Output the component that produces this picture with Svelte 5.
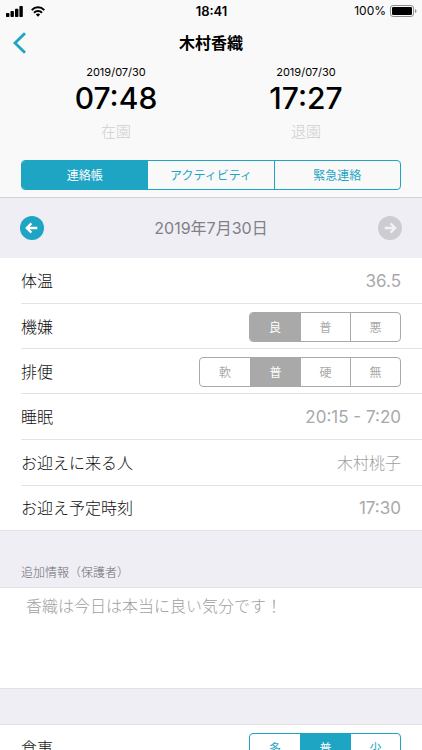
<script lang="ts">
	// Daily contact-book screen for one child.

	const tabs = ['連絡帳', 'アクティビティ', '緊急連絡'];
	let activeTab = $state(0);

	const attendance = [
		{ date: '2019/07/30', time: '07:48', label: '在園' },
		{ date: '2019/07/30', time: '17:27', label: '退園' },
	];

	let temperature = $state('36.5');
	let mood = $state('良');
	let stool = $state('普');
	let sleep = $state('20:15 - 7:20');
	let pickupPerson = $state('木村桃子');
	let pickupTime = $state('17:30');
	let note = $state('香織は今日は本当に良い気分です！');
	let meal = $state('普');
</script>

{#snippet segments(name: string, options: string[], value: string, onpick: (v: string) => void)}
	<div class="segments">
		{#each options as option}
			<label class="segment">
				<input
					type="radio"
					{name}
					value={option}
					checked={option === value}
					onchange={() => onpick(option)}
				/>
				<span>{option}</span>
			</label>
		{/each}
	</div>
{/snippet}

<div class="screen">
	<header class="header">
		<div class="status">
			<div class="status-left">
				<svg width="17" height="11" viewBox="0 0 17 11" aria-hidden="true">
					<rect x="0" y="7" width="3.4" height="4" rx="0.8" />
					<rect x="4.5" y="5" width="3.4" height="6" rx="0.8" />
					<rect x="9" y="2.7" width="3.4" height="8.3" rx="0.8" />
					<rect x="13.4" y="0" width="3.4" height="11" rx="0.8" />
				</svg>
				<svg width="14" height="11" viewBox="0 0 14 11" aria-hidden="true">
					<g fill="none" stroke="#000" stroke-width="2">
						<path d="M0.7 4.1 C4.2 0.4 9.8 0.4 13.3 4.1" />
						<path d="M3 6.8 C5.2 4.5 8.8 4.5 11 6.8" />
					</g>
					<path d="M4.8 8.5 Q7 6.6 9.2 8.5 L7 10.8 Z" />
				</svg>
			</div>
			<span class="clock">18:41</span>
			<div class="status-right">
				<span>100%</span>
				<svg width="27" height="12" viewBox="0 0 27 12" aria-hidden="true">
					<rect x="0.5" y="0.5" width="23" height="11" rx="2.6" fill="none" stroke="#8c8c8c" />
					<rect x="2" y="2" width="20" height="8" rx="1.2" />
					<path d="M25 4 Q26.5 4.6 26.5 6 T25 8 Z" fill="#8c8c8c" />
				</svg>
			</div>
		</div>

		<nav class="navbar">
			<button class="back" aria-label="戻る">
				<svg width="13" height="22" viewBox="0 0 13 22" aria-hidden="true">
					<path d="M12 1.2 L2 11 L12 20.8" fill="none" stroke="#1ea5c4" stroke-width="2.8" />
				</svg>
			</button>
			<h1>木村香織</h1>
		</nav>

		<div class="attendance">
			{#each attendance as entry}
				<div class="stamp">
					<span class="stamp-date">{entry.date}</span>
					<span class="stamp-time">{entry.time}</span>
					<span class="stamp-label">{entry.label}</span>
				</div>
			{/each}
		</div>

		<div class="tabs" role="tablist">
			{#each tabs as tab, i}
				<button
					class="tab"
					class:active={activeTab === i}
					role="tab"
					aria-selected={activeTab === i}
					onclick={() => (activeTab = i)}
				>{tab}</button>
			{/each}
		</div>
	</header>

	<main class="content">
		<div class="daybar">
			<button class="day-btn" aria-label="前の日">
				<svg width="24" height="24" viewBox="0 0 24 24" aria-hidden="true">
					<circle cx="12" cy="12" r="12" />
					<path d="M17.3 12 H7 M11.4 7.4 L6.8 12 L11.4 16.6" />
				</svg>
			</button>
			<h2>2019年7月30日</h2>
			<button class="day-btn" aria-label="次の日" disabled>
				<svg width="24" height="24" viewBox="0 0 24 24" aria-hidden="true">
					<circle cx="12" cy="12" r="12" />
					<path d="M6.7 12 H17 M12.6 7.4 L17.2 12 L12.6 16.6" />
				</svg>
			</button>
		</div>

		<section class="list muted">
			<div class="row">
				<label for="temperature">体温</label>
				<input id="temperature" class="value numeric" type="text" bind:value={temperature} />
			</div>
			<div class="row row-segments" role="radiogroup" aria-labelledby="mood-label">
				<span id="mood-label">機嫌</span>
				{@render segments('mood', ['良', '普', '悪'], mood, (v) => (mood = v))}
			</div>
			<div class="row row-segments" role="radiogroup" aria-labelledby="stool-label">
				<span id="stool-label">排便</span>
				{@render segments('stool', ['軟', '普', '硬', '無'], stool, (v) => (stool = v))}
			</div>
			<div class="row">
				<label for="sleep">睡眠</label>
				<input id="sleep" class="value numeric" type="text" bind:value={sleep} />
			</div>
			<div class="row">
				<label for="pickup-person">お迎えに来る人</label>
				<input id="pickup-person" class="value" type="text" bind:value={pickupPerson} />
			</div>
			<div class="row">
				<label for="pickup-time">お迎え予定時刻</label>
				<input id="pickup-time" class="value numeric" type="text" bind:value={pickupTime} />
			</div>
		</section>

		<label class="section-title" for="note">追加情報（保護者）</label>
		<textarea id="note" class="note" rows="4" bind:value={note}></textarea>

		<section class="list meal">
			<div class="row row-segments" role="radiogroup" aria-labelledby="meal-label">
				<span id="meal-label">食事</span>
				{@render segments('meal', ['多', '普', '少'], meal, (v) => (meal = v))}
			</div>
		</section>
	</main>
</div>

<style>
	:global(body) {
		background: #efeef4;
	}

	.screen {
		--accent: #1ea5c4;
		--line: #e3e3e5;
		display: flex;
		flex-direction: column;
		height: 100vh;
		font-family: Inter, 'Noto Sans CJK JP', sans-serif;
		font-size: 16px;
		font-weight: 300;
		color: #111;
		overflow: hidden;
	}

	.screen * {
		box-sizing: border-box;
	}

	button,
	input,
	textarea {
		font: inherit;
		margin: 0;
		padding: 0;
		border: none;
		background: none;
	}

	button {
		cursor: pointer;
	}

	svg {
		display: block;
	}

	.header {
		flex: none;
		background: #f9f9f9;
		border-bottom: 1px solid #d2d1d6;
		padding-bottom: 7px;
	}

	.status {
		display: grid;
		grid-template-columns: 1fr auto 1fr;
		align-items: center;
		height: 22px;
		padding: 0 5px 0 6px;
		font-size: 12px;
		font-weight: 400;
		line-height: 22px;
		color: #000;
	}

	.status-left,
	.status-right {
		display: flex;
		align-items: center;
		gap: 8px;
	}

	.status-right {
		justify-content: flex-end;
		gap: 4px;
	}

	.clock {
		font-size: 13px;
		font-weight: 600;
	}

	.navbar {
		display: grid;
		grid-template-columns: 1fr auto 1fr;
		align-items: center;
		height: 42px;
		padding: 0 13px;
	}

	.back {
		justify-self: start;
	}

	h1 {
		margin: 0;
		font-size: 16px;
		font-weight: 700;
		line-height: 24px;
		color: #000;
	}

	.attendance {
		display: grid;
		grid-template-columns: 1fr 1fr;
		padding: 0 21px;
		color: #000;
	}

	.stamp {
		display: flex;
		flex-direction: column;
		align-items: center;
	}

	.stamp-date {
		font-size: 11px;
		font-weight: 400;
		line-height: 16px;
	}

	.stamp-time {
		font-size: 30px;
		font-weight: 500;
		line-height: 36px;
	}

	.stamp-label {
		margin-top: 6px;
		font-size: 15px;
		line-height: 20px;
		color: #cfcfcf;
	}

	.tabs {
		display: flex;
		height: 30px;
		margin: 18px 21px 0;
		border: 1px solid var(--accent);
		border-radius: 4px;
		overflow: hidden;
	}

	.tab {
		flex: 1;
		font-size: 12px;
		font-weight: 400;
		line-height: 30px;
		color: var(--accent);
	}

	.tab + .tab {
		border-left: 1px solid var(--accent);
	}

	.tab.active {
		background: var(--accent);
		color: #fff;
	}

	.content {
		flex: 1;
		min-height: 0;
		overflow-y: auto;
		scrollbar-width: none;
		background: #efeef4;
	}

	.daybar {
		display: flex;
		align-items: center;
		justify-content: space-between;
		height: 60px;
		padding: 0 20px;
	}

	h2 {
		margin: 0;
		font-size: 16px;
		font-weight: 400;
		line-height: 24px;
		color: #808085;
	}

	.day-btn circle {
		fill: var(--accent);
	}

	.day-btn path {
		fill: none;
		stroke: #fff;
		stroke-width: 2.3;
	}

	.day-btn:disabled circle {
		fill: #cdccd1;
	}

	.day-btn:disabled path {
		stroke: #f2f1f6;
	}

	.list {
		--segment: var(--accent);
		padding-left: 21px;
		background: #fff;
		border-bottom: 1px solid var(--line);
	}

	.list.muted {
		--segment: #a9a9a9;
	}

	.row {
		display: flex;
		align-items: center;
		justify-content: space-between;
		height: 46px;
		padding-right: 21px;
		line-height: 24px;
		border-bottom: 1px solid var(--line);
	}

	.row-segments {
		height: 45px;
		padding-top: 2px;
	}

	.row:last-child {
		height: 44px;
		border-bottom: none;
	}

	.row label,
	.row > span {
		white-space: nowrap;
	}

	.value {
		flex: 1;
		min-width: 0;
		text-align: right;
		color: #a0a0a0;
		outline: none;
	}

	.numeric {
		font-size: 17px;
		font-weight: 400;
		color: #a9a9a9;
	}

	.segments {
		display: flex;
		height: 30px;
		border: 1px solid var(--segment);
		border-radius: 4px;
		overflow: hidden;
	}

	.segment {
		display: flex;
		width: 50px;
		cursor: pointer;
	}

	.segment + .segment {
		border-left: 1px solid var(--segment);
	}

	.segment input {
		appearance: none;
		width: 0;
		height: 0;
	}

	.segment span {
		flex: 1;
		font-size: 12px;
		font-weight: 400;
		line-height: 30px;
		text-align: center;
		color: var(--segment);
	}

	.segment input:checked + span {
		background: var(--segment);
		color: #fff;
	}

	.section-title {
		display: block;
		padding: 32px 21px 4px;
		font-size: 12px;
		line-height: 20px;
		color: #6d6c72;
	}

	.note {
		display: block;
		width: 100%;
		height: 102px;
		padding: 6px 26px;
		line-height: 24px;
		color: #a0a0a0;
		background: #fff;
		border: solid var(--line);
		border-width: 1px 0;
		resize: none;
		outline: none;
	}

	.meal {
		margin-top: 35px;
		border-top: 1px solid var(--line);
	}
</style>
